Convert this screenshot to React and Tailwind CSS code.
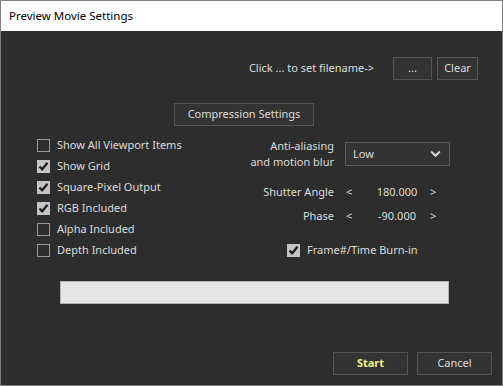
import React, { useState } from "react";

const font = { fontFamily: '"Noto Sans", "DejaVu Sans", sans-serif' };

function Check({ checked, onChange, label }) {
    return (
        <label className="flex items-center h-[21px] cursor-default select-none whitespace-nowrap">
            <span
                className={
                    "w-[13px] h-[13px] flex items-center justify-center border " +
                    (checked ? "bg-[#c4c4c4] border-[#c4c4c4]" : "bg-[#2d2d2d] border-[#9a9a9a]")
                }
                onClick={onChange}
            >
                {checked && (
                    <svg width="11" height="11" viewBox="0 0 11 11">
                        <path d="M1.5 5.5 L4.2 8.3 L9.5 1.8" fill="none" stroke="#1a1a1a" strokeWidth="2.2" />
                    </svg>
                )}
            </span>
            <span className="ml-[7px] text-[11px] text-[#dcdcdc]">{label}</span>
        </label>
    );
}

function Btn({ children, className = "" }) {
    return (
        <button
            className={
                "h-[23px] bg-[#333333] border border-[#555555] text-[11px] text-[#dcdcdc] flex items-center justify-center whitespace-nowrap " +
                className
            }
        >
            {children}
        </button>
    );
}

export default function App() {
    const [opts, setOpts] = useState({
        allItems: false,
        grid: true,
        square: true,
        rgb: true,
        alpha: false,
        depth: false,
        burn: true
    });
    const toggle = (k) => setOpts({ ...opts, [k]: !opts[k] });

    const left = [
        ["allItems", "Show All Viewport Items"],
        ["grid", "Show Grid"],
        ["square", "Square-Pixel Output"],
        ["rgb", "RGB Included"],
        ["alpha", "Alpha Included"],
        ["depth", "Depth Included"]
    ];

    return (
        <div className="w-[503px] h-[386px] border border-[#808080] flex flex-col overflow-hidden" style={font}>
            {/* title bar */}
            <div className="h-[30px] shrink-0 bg-white flex items-center pl-[8px] text-[11.5px] text-black">
                Preview Movie Settings
            </div>

            <div className="flex-1 bg-[#2d2d2d] flex flex-col">
                {/* filename */}
                <div className="flex items-center justify-end mt-[26px] pr-[24px] h-[23px]">
                    <span className="text-[11px] text-[#dcdcdc] mr-[19px] whitespace-nowrap">Click ... to set filename-&gt;</span>
                    <Btn className="w-[39px] mr-[5px]">...</Btn>
                    <Btn className="w-[41px]">Clear</Btn>
                </div>

                {/* compression */}
                <div className="mt-[23px] pl-[173px]">
                    <Btn className="w-[140px]">Compression Settings</Btn>
                </div>

                {/* options */}
                <div className="flex mt-[9px] h-[126px]">
                    <div className="flex flex-col pl-[36px] w-[249px]">
                        {left.map(([k, l]) => (
                            <Check key={k} checked={opts[k]} onChange={() => toggle(k)} label={l} />
                        ))}
                    </div>

                    <div className="flex flex-col">
                        <div className="flex items-center mt-[3px] h-[32px]">
                            <div className="w-[84px] text-right text-[11px] leading-[16px] text-[#dcdcdc] whitespace-nowrap">
                                Anti-aliasing
                                <br />
                                and motion blur
                            </div>
                            <div className="ml-[11px] w-[105px] h-[24px] border border-[#5a5a5a] bg-[#333333] flex items-center justify-between pl-[7px] pr-[8px]">
                                <span className="text-[11px] text-[#dcdcdc]">Low</span>
                                <svg width="11" height="8" viewBox="0 0 11 8">
                                    <path d="M1.2 1.5 L5.5 5.8 L9.8 1.5" fill="none" stroke="#d8d8d8" strokeWidth="2" />
                                </svg>
                            </div>
                        </div>

                        <div className="flex items-center mt-[14px] h-[16px] text-[11px] text-[#dcdcdc] whitespace-nowrap">
                            <div className="w-[84px] text-right">Shutter Angle</div>
                            <span className="ml-[12px] w-[20px]">&lt;</span>
                            <span className="w-[62px] text-center">180.000</span>
                            <span className="ml-[2px]">&gt;</span>
                        </div>

                        <div className="flex items-center mt-[8px] h-[16px] text-[11px] text-[#dcdcdc] whitespace-nowrap">
                            <div className="w-[84px] text-right">Phase</div>
                            <span className="ml-[12px] w-[20px]">&lt;</span>
                            <span className="w-[62px] text-center">-90.000</span>
                            <span className="ml-[2px]">&gt;</span>
                        </div>

                        <div className="mt-[16px] pl-[37px]">
                            <Check checked={opts.burn} onChange={() => toggle("burn")} label="Frame#/Time Burn-in" />
                        </div>
                    </div>
                </div>

                {/* progress */}
                <div className="mt-[20px] ml-[59px] w-[389px] h-[23px] bg-[#e5e5e5] border border-[#b4b4b4]" />

                {/* buttons */}
                <div className="flex justify-end mt-[48px] pr-[10px]">
                    <Btn className="w-[75px] mr-[9px] font-bold text-[#f2f28c]">Start</Btn>
                    <Btn className="w-[75px]">Cancel</Btn>
                </div>
            </div>
        </div>
    );
}
